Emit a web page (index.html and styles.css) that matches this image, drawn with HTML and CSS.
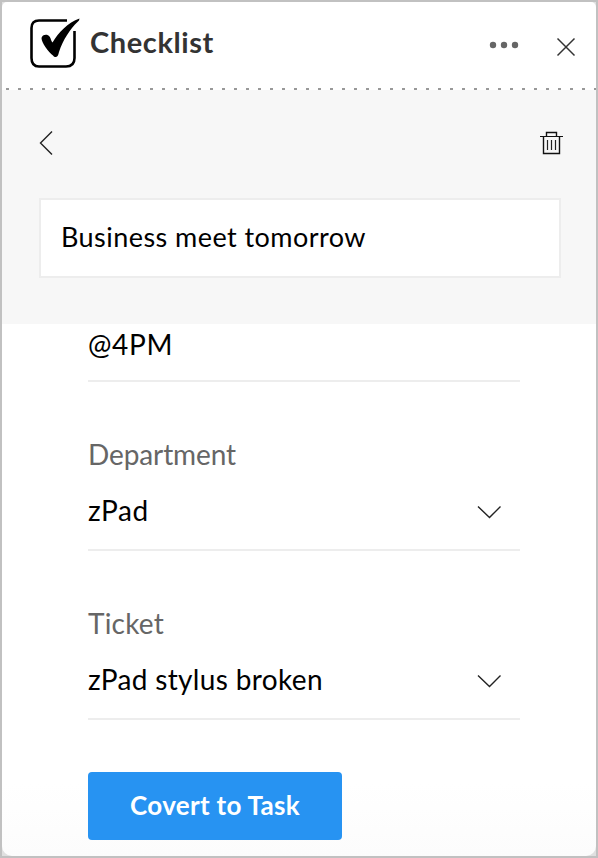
FILE: index.html
```
<!DOCTYPE html>
<html lang="en">
<head>
  <meta charset="UTF-8" />
  <meta name="viewport" content="width=device-width, initial-scale=1.0"/>
  <title>Checklist</title>
  <link rel="stylesheet" href="styles.css">
</head>
<body>
  <div class="frame">
    <div class="panel">
      <div class="header">
        <svg class="logo" width="52" height="52" viewBox="0 0 52 52">
          <path d="M39 4.500H11Q3.500 4.500 3.500 12V42Q3.500 50.500 11 50.500H38Q46.500 50.500 46.500 42V15" fill="none" stroke="#000" stroke-width="2.600"/>
          <path d="M13.500 22C14 18.500 19.500 17.500 21.500 20.500C23 22.500 23 25 24.500 26.500C30 17 40 6.500 51.500 2.500Q51.500 4.500 49.500 6C42 13 35 24 31 36C30 42 27 42 25 39.500C20.500 36 13.500 27 13.500 22Z"/>
        </svg>
        <h1 class="title">Checklist</h1>
        <button class="icon-btn more">
          <svg width="30" height="8" viewBox="0 0 30 8"><g fill="#666"><circle cx="4" cy="4" r="3.200"/><circle cx="15" cy="4" r="3.200"/><circle cx="26" cy="4" r="3.200"/></g></svg>
        </button>
        <button class="icon-btn">
          <svg width="20" height="20" viewBox="0 0 20 20"><path d="M1.500 1.500L18.500 18.500M18.500 1.500L1.500 18.500" stroke="#333" stroke-width="1.500"/></svg>
        </button>
      </div>
      <div class="dots"></div>

      <div class="top">
        <div class="toolbar">
          <button class="icon-btn">
            <svg width="14" height="26" viewBox="0 0 14 26"><path d="M13 1.500L1.500 13L13 24.500" fill="none" stroke="#222" stroke-width="1.400"/></svg>
          </button>
          <button class="icon-btn trash">
            <svg width="24" height="24" viewBox="0 0 24 24" fill="none" stroke="#111"><path d="M1 5.500H24" stroke-width="1.200"/><path d="M7.500 5V1.500H17.500V5M4.500 6V22.500H20.500V6" stroke-width="1.400"/><path d="M8.500 9V19M12.500 9V19M16.500 9V19" stroke="#222" stroke-width="1.200"/></svg>
          </button>
        </div>
        <div class="subject">Business meet tomorrow</div>
      </div>

      <div class="form">
        <div class="field note"><span class="value at">@4PM</span></div>
        <div class="field">
          <label class="dept">Department</label>
          <div class="select">
            <span class="value zpad">zPad</span>
            <svg width="24" height="14" viewBox="0 0 24 14"><path d="M1 1.500L12.500 12.500L23.500 1.500" fill="none" stroke="#222" stroke-width="1.400"/></svg>
          </div>
        </div>
        <div class="field">
          <label class="tick">Ticket</label>
          <div class="select">
            <span class="value stylus">zPad stylus broken</span>
            <svg width="24" height="14" viewBox="0 0 24 14"><path d="M1 1.500L12.500 12.500L23.500 1.500" fill="none" stroke="#222" stroke-width="1.400"/></svg>
          </div>
        </div>
        <button class="convert">Covert to Task</button>
      </div>
    </div>
  </div>
</body>
</html>
```
FILE: styles.css
```
* {
  box-sizing: border-box;
  margin: 0;
  padding: 0;
}

body {
  font-family: Lato, "Liberation Sans", sans-serif;
  color: #000;
}

svg {
  display: block;
}

.frame {
  height: 858px;
  border: 2px solid #c1c1c1;
  background: #e0e0e0;
}

.panel {
  height: 854px;
  border-radius: 5px 5px 10px 10px;
  background: linear-gradient(#fff 780px, #fcfcfc);
  overflow: hidden;
}

.header {
  display: flex;
  align-items: center;
  height: 86px;
  padding: 0 20px 6px 26px;
}

.title {
  flex: 1;
  margin-left: 10px;
  font-size: 29px;
  line-height: 34px;
  letter-spacing: 0.6px;
  color: #333;
}

.icon-btn {
  border: none;
  background: none;
}

.more {
  margin: 5px 37px 0 0;
}

.header .icon-btn:last-child {
  margin-top: 9px;
}

.dots {
  height: 2px;
  background: repeating-linear-gradient(90deg, transparent 0 4px, #999 4px 7px, transparent 7px 12px);
}

.top {
  height: 234px;
  padding: 40px 35px 0 37px;
  background: #f7f7f7;
}

.toolbar {
  display: flex;
  justify-content: space-between;
  align-items: flex-start;
  height: 68px;
  margin-right: -2px;
}

.trash {
  margin-top: 1px;
}

.subject {
  height: 80px;
  padding-left: 20px;
  border: 2px solid #ededed;
  background: #fff;
  font-size: 27px;
  line-height: 74px;
  letter-spacing: 0.45px;
}

.form {
  padding: 0 76px 0 86px;
}

.field {
  height: 169px;
  border-bottom: 2px solid #ededed;
  font-size: 28px;
}

.note {
  height: 58px;
  padding-top: 3px;
}

.field label {
  display: block;
  padding-top: 55px;
  line-height: 34px;
  color: #666;
}

.value {
  line-height: 34px;
  letter-spacing: 0.35px;
}

.at {
  letter-spacing: 0.7px;
}

.zpad {
  letter-spacing: 0.6px;
}

.dept {
  letter-spacing: -0.1px;
}

.tick {
  letter-spacing: 0.2px;
}

.select {
  display: flex;
  justify-content: space-between;
  align-items: center;
  padding: 22px 19px 0 0;
}

.select svg {
  margin-top: 3px;
}

.convert {
  width: 254px;
  height: 68px;
  margin-top: 52px;
  padding-bottom: 2px;
  border: none;
  border-radius: 4px;
  background: #2793f2;
  color: #fff;
  font: bold 26px Lato, sans-serif;
  letter-spacing: 0.3px;
}
```
